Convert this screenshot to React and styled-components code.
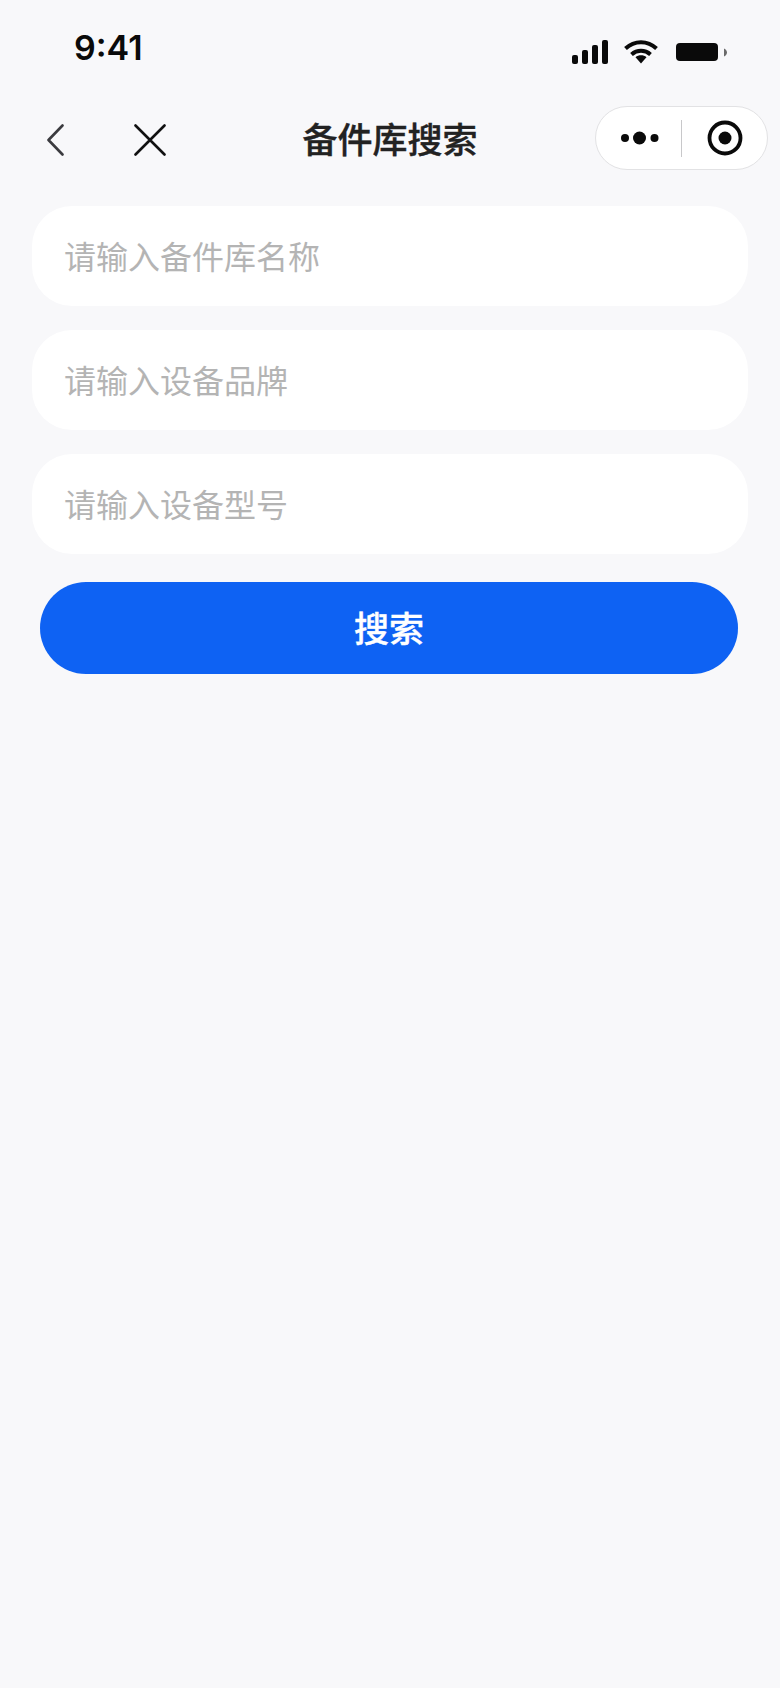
import React from "react";
import styled, { createGlobalStyle } from "styled-components";

const Global = createGlobalStyle`
  html, body { margin: 0; padding: 0; background: #f8f8fa; }
  * { box-sizing: border-box; }
`;
const Page = styled.div`
  width: 780px; height: 1688px; background: #f8f8fa; overflow: hidden;
  font-family: "Noto Sans CJK SC", "Noto Sans", sans-serif;
`;
const StatusBar = styled.div`
  height: 96px; display: flex; justify-content: space-between; align-items: flex-start;
  padding: 27px 53px 0 74px;
`;
const Time = styled.div`
  font-family: Inter, sans-serif; font-size: 34px; line-height: 42px; font-weight: 600; color: #0a0a0a; letter-spacing: 0;
`;
const StatusIcons = styled.div`
  display: flex; align-items: flex-start; gap: 16px; padding-top: 13px;
`;
const NavBar = styled.div`
  height: 85px; display: grid; grid-template-columns: 1fr auto 1fr; align-items: center; padding: 0 12px 0 12px;
`;
const NavLeft = styled.div`
  display: flex; align-items: center; gap: 70px; padding: 2px 0 0 35px;
`;
const Title = styled.div`
  text-align: center; font-size: 35px; font-weight: 500; line-height: 48px; color: #222; margin-top: -2px;
  -webkit-text-stroke: 0.4px #222;
`;
const Capsule = styled.div`
  justify-self: end; width: 173px; height: 64px; border-radius: 32px; background: #fff; border: 1px solid #e2e2e4;
  display: flex; align-items: center; margin-top: -1px;
`;
const CapsuleSide = styled.div`
  flex: 1; display: flex; justify-content: center; align-items: center;
`;
const Divider = styled.div`
  width: 1px; height: 37px; background: #c8c8ca;
`;
const Form = styled.div`
  display: flex; flex-direction: column; gap: 24px; padding: 25px 32px 0;
`;
const Field = styled.input`
  display: block; width: 716px; height: 100px; border: none; outline: none; border-radius: 40px; background: #fff;
  padding: 0 32px 2px; font: 400 32px/44px "Noto Sans CJK SC", sans-serif; color: #222;
  &::placeholder { color: #b4b4b4; opacity: 1; }
`;
const SearchButton = styled.button`
  display: block; width: 698px; height: 92px; margin: 28px 0 0 40px; border: none; border-radius: 46px;
  background: #0e62f3; color: #fff; font: 500 35px/46px "Noto Sans CJK SC", sans-serif; padding: 0 0 2px;
  -webkit-text-stroke: 0.4px #fff;
`;

const Signal = () => (
  <svg width="36" height="24" viewBox="0 0 36 24" fill="#0a0a0a">
    <rect x="0" y="15" width="6" height="9" rx="2" />
    <rect x="10" y="10" width="6" height="14" rx="2" />
    <rect x="20" y="5" width="6" height="19" rx="2" />
    <rect x="30" y="0" width="6" height="24" rx="2" />
  </svg>
);
const Wifi = () => (
  <svg width="34" height="24" viewBox="0 0 34 24" fill="none" stroke="#0a0a0a" strokeWidth="4">
    <path d="M1.5 8.5C10.5 0 23.5 0 32.5 8.5" />
    <path d="M7.5 14.5C13 9.6 21 9.6 26.5 14.5" />
    <path d="M11.5 17.2L17 23.5L22.5 17.2C19.5 14.6 14.5 14.6 11.5 17.2Z" fill="#0a0a0a" stroke="none" />
  </svg>
);
const Battery = () => (
  <svg width="53" height="22" viewBox="-2 0 53 22" fill="#0a0a0a">
    <rect x="0" y="3" width="42" height="18" rx="4" />
    <path d="M48 8.5C50 9.5 51 11 51 12.5C51 14 50 15.5 48 16.5Z" fill="#6a6a6a" />
  </svg>
);
const Back = () => (
  <svg width="17" height="32" viewBox="0 0 17 32" fill="none" stroke="#3b3b3f" strokeWidth="2.6" strokeLinecap="round" strokeLinejoin="round">
    <path d="M15.5 1.5L1.5 16L15.5 30.5" />
  </svg>
);
const Close = () => (
  <svg width="32" height="32" viewBox="0 0 32 32" fill="none" stroke="#111" strokeWidth="2.6" strokeLinecap="round">
    <path d="M1.5 1.5L30.5 30.5M30.5 1.5L1.5 30.5" />
  </svg>
);
const DotsWrap = styled.svg`
  margin-left: 3px;
`;
const Dots = () => (
  <DotsWrap width="38" height="14" viewBox="0 0 38 14" fill="#0a0a0a">
    <circle cx="4" cy="7" r="4" />
    <circle cx="18.5" cy="7" r="6.5" />
    <circle cx="33.5" cy="7" r="4" />
  </DotsWrap>
);
const Record = () => (
  <svg width="36" height="36" viewBox="0 0 36 36" fill="none">
    <circle cx="18" cy="18" r="15.5" stroke="#0a0a0a" strokeWidth="3.8" />
    <circle cx="18" cy="18" r="6.5" fill="#0a0a0a" />
  </svg>
);

export default function App() {
  return (
    <Page>
      <Global />
      <StatusBar>
        <Time>9:41</Time>
        <StatusIcons>
          <Signal />
          <Wifi />
          <Battery />
        </StatusIcons>
      </StatusBar>
      <NavBar>
        <NavLeft>
          <Back />
          <Close />
        </NavLeft>
        <Title>备件库搜索</Title>
        <Capsule>
          <CapsuleSide><Dots /></CapsuleSide>
          <Divider />
          <CapsuleSide><Record /></CapsuleSide>
        </Capsule>
      </NavBar>
      <Form>
        <Field placeholder="请输入备件库名称" />
        <Field placeholder="请输入设备品牌" />
        <Field placeholder="请输入设备型号" />
      </Form>
      <SearchButton>搜索</SearchButton>
    </Page>
  );
}
